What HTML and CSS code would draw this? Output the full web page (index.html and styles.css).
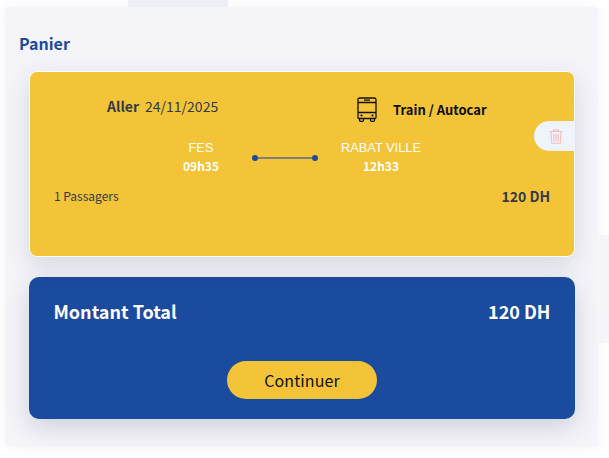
FILE: index.html
```html
<!DOCTYPE html>
<html lang="fr">
<head>
<meta charset="utf-8">
<title>Panier</title>
<link rel="stylesheet" href="styles.css">
</head>
<body>
<div class="tab-strip"></div>
<div class="side-strip"></div>
<main class="panel">
  <h2 class="title">Panier</h2>
  <section class="trip">
    <div class="trip-head">
      <div class="trip-date"><b>Aller</b><span>24/11/2025</span></div>
      <div class="trip-mode">
        <svg class="bus" viewBox="0 0 20 25" width="20" height="25" fill="none" stroke="#111" stroke-width="1.300">
          <path d="M1 2.500Q1 1 3 1H17Q19 1 19 2.500V20.500Q19 21.500 18 21.500H2Q1 21.500 1 20.500Z"/>
          <path d="M1 5.500H19M1 15.500H19M7 3.200H13"/>
          <path d="M2.500 21.500V23Q2.500 24.500 4 24.500H5Q6.500 24.500 6.500 23V21.500M13.500 21.500V23Q13.500 24.500 15 24.500H16Q17.500 24.500 17.500 23V21.500"/>
          <circle cx="4.500" cy="18.500" r="1.100" fill="#111" stroke="none"/>
          <circle cx="15.500" cy="18.500" r="1.100" fill="#111" stroke="none"/>
        </svg>
        <b>Train / Autocar</b>
      </div>
    </div>
    <div class="route">
      <div class="stop"><span class="city">FES</span><b class="time">09h35</b></div>
      <div class="line"><i class="dot"></i><i class="rule"></i><i class="dot"></i></div>
      <div class="stop"><span class="city">RABAT VILLE</span><b class="time">12h33</b></div>
    </div>
    <div class="trip-foot">
      <span class="pax">1 Passagers</span>
      <b class="price">120 DH</b>
    </div>
    <div class="delete">
      <svg viewBox="0 0 14 15" width="14" height="15" fill="none" stroke="#f7bcba" stroke-width="1.100">
        <path d="M0.500 2.500H13.500M4.500 2.500V1H9.500V2.500M1.800 2.500L2.800 14.300H11.200L12.200 2.500"/>
        <path d="M4.800 5V12.500M7 5V12.500M9.200 5V12.500"/>
      </svg>
    </div>
  </section>
  <section class="total">
    <div class="total-row"><b>Montant Total</b><b>120 DH</b></div>
    <button class="cta" type="button">Continuer</button>
  </section>
</main>
</body>
</html>
```
FILE: styles.css
```css
* { box-sizing: border-box; }
html, body { margin: 0; height: 100%; }
body {
  position: relative;
  width: 609px;
  height: 458px;
  overflow: hidden;
  background: #fff;
  font-family: "Noto Sans CJK JP", "Noto Sans", sans-serif;
  padding: 7px 0 0 5px;
}
b { font-weight: 700; }
.tab-strip {
  position: absolute;
  left: 128px; top: 0;
  width: 100px; height: 7px;
  background: #eff0f6;
}
.side-strip {
  position: absolute;
  left: 599px; top: 235px;
  width: 10px; height: 108px;
  background: #f6f6fa;
}
.panel {
  position: relative;
  width: 593px;
  height: 440px;
  padding: 24px 23px 0 14px;
  background: #f4f4f9;
  border-radius: 4px;
  box-shadow: 0 0 12px rgba(240, 240, 248, .7);
}
.title {
  margin: 0 0 16px;
  height: 24px;
  font-size: 16px;
  line-height: 24px;
  font-weight: 700;
  color: #1b4b9f;
}
.trip {
  position: relative;
  height: 186px;
  margin-left: 10px;
  padding: 1px 24px 0;
  background: #f3c338;
  border: 1px solid #fff;
  border-radius: 8px;
  color: #333a47;
  box-shadow: 0 8px 24px rgba(60, 60, 100, .16);
}
.trip-head {
  display: flex;
  height: 49px;
  padding: 19px 0 0 53px;
}
.trip-date {
  display: flex;
  gap: 6px;
  width: 250px;
  height: 28px;
  font-size: 14px;
  line-height: 28px;
}
.trip-mode {
  display: flex;
  align-items: center;
  gap: 16px;
  height: 28px;
  margin-top: 3px;
  font-size: 13px;
  color: #0d0d0d;
}
.route {
  display: flex;
  height: 61px;
  padding: 14px 0 0 97px;
}
.stop {
  display: flex;
  flex-direction: column;
  align-items: center;
  flex: none;
  width: 100px;
  color: #fff;
}
.city {
  height: 20px;
  font-family: "Liberation Sans", sans-serif;
  font-size: 12.800px;
  line-height: 24px;
  white-space: nowrap;
}
.time {
  font-size: 12px;
  line-height: 18px;
  margin-top: 1px;
}
.line {
  display: flex;
  align-items: center;
  flex: none;
  align-self: flex-start;
  width: 66px;
  height: 18px;
  margin: 13px 13px 0 1px;
}
.dot {
  flex: none;
  width: 6px; height: 6px;
  border-radius: 50%;
  background: #1b4b9f;
}
.rule {
  flex: 1;
  height: 2px;
  background: #7f7f74;
}
.trip-foot {
  display: flex;
  justify-content: space-between;
  align-items: center;
  height: 28px;
  margin-top: -1px;
}
.pax { font-size: 12px; line-height: 18px; }
.price { font-size: 14px; line-height: 18px; }
.delete {
  position: absolute;
  right: -1px; top: 49px;
  display: flex;
  align-items: center;
  padding-left: 15px;
  width: 41px;
  height: 30px;
  background: #eff3fb;
  border-radius: 15px 0 0 15px;
}
.total {
  display: flex;
  flex-direction: column;
  align-items: center;
  height: 142px;
  margin: 20px 0 0 10px;
  padding: 20px 24.500px 0;
  background: #1b4b9f;
  border-radius: 10px;
  color: #fff;
  box-shadow: 0 8px 24px rgba(60, 60, 100, .2);
}
.total-row {
  display: flex;
  justify-content: space-between;
  align-self: stretch;
  height: 28px;
  font-size: 18px;
  line-height: 28px;
}
.cta {
  margin-top: 36px;
  width: 150px;
  height: 38px;
  border: 0;
  border-radius: 19px;
  background: #f3c338;
  color: #111;
  font: 400 16px/24px "Noto Sans CJK JP", "Noto Sans", sans-serif;
  letter-spacing: .1px;
}
```
